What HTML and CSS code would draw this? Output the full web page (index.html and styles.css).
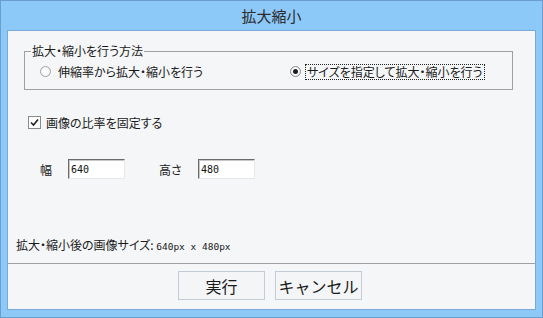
FILE: index.html
```html
<!DOCTYPE html>
<html lang="ja">
<head>
    <meta charset="UTF-8">
    <title>拡大縮小</title>
    <link rel="stylesheet" href="styles.css">
</head>
<body>

<div class="window">
    <div class="title">拡大縮小</div>

    <div class="client">
        <fieldset class="group">
            <legend>拡大・縮小を行う方法</legend>
            <div class="radios">
                <label class="opt">
                    <span class="radio"></span>
                    <span>伸縮率から拡大・縮小を行う</span>
                </label>
                <label class="opt">
                    <span class="radio checked"></span>
                    <span class="focus">サイズを指定して拡大・縮小を行う</span>
                </label>
            </div>
        </fieldset>

        <label class="keep">
            <span class="check">
                <svg width="9" height="9" viewBox="0 0 9 9"><path d="M1 4.5 L3.5 7 L8 1.5" fill="none" stroke="#222" stroke-width="1.6"/></svg>
            </span>
            <span>画像の比率を固定する</span>
        </label>

        <div class="size-row">
            <span class="lbl lbl-w">幅</span>
            <input type="text" class="num" value="640">
            <span class="lbl lbl-h">高さ</span>
            <input type="text" class="num" value="480">
        </div>

        <div class="status">拡大・縮小後の画像サイズ: <span class="px">640px x 480px</span></div>

        <div class="footer">
            <button class="btn">実行</button>
            <button class="btn">キャンセル</button>
        </div>
    </div>
</div>

</body>
</html>
```

FILE: styles.css
```css
body {
    margin: 0;
    font-family: "Noto Sans CJK JP", "Noto Sans", sans-serif;
    color: #1a1a1a;
}

.window {
    width: 543px;
    height: 318px;
    box-sizing: border-box;
    border: 1px solid #6b9dcf;
    background-color: #8cc8f8;
    padding: 0 6px 7px 6px;
    display: flex;
    flex-direction: column;
}

.title {
    height: 29px;
    line-height: 30px;
    text-align: center;
    font-size: 15px;
    color: #2b2b2b;
}

.client {
    flex: 1;
    border: 1px solid #78a9d9;
    background-color: #f5f6f8;
    display: flex;
    flex-direction: column;
    font-size: 12px;
    font-feature-settings: "palt";
}

.group {
    margin: 13px 0 0 16px;
    width: 489px;
    height: 46px;
    box-sizing: border-box;
    border: 1px solid #a0a0a0;
    padding: 0 0 0 6px;
}

.group legend {
    padding: 0 1px;
    font-size: 12px;
    line-height: 14px;
}

.radios {
    display: grid;
    grid-template-columns: 250px 1fr;
    padding: 6px 0 0 9px;
}

.opt {
    display: flex;
    align-items: center;
    height: 15px;
}

.radio {
    width: 9px;
    height: 9px;
    border-radius: 50%;
    border: 1px solid #a4a4a4;
    background: radial-gradient(circle, #ffffff 45%, #dcdcdc 100%);
    margin-right: 7px;
    position: relative;
}

.radio.checked {
    border-color: #8a8a8a;
    margin-right: 5px;
}

.radio.checked::after {
    content: "";
    position: absolute;
    left: 2px;
    top: 2px;
    width: 5px;
    height: 5px;
    border-radius: 50%;
    background-color: #1e1e1e;
}

.focus {
    outline: 1px dotted #222;
    padding: 0 1px;
    line-height: 14px;
}

.keep {
    display: flex;
    align-items: center;
    margin: 24px 0 0 20px;
    height: 16px;
}

.check {
    width: 11px;
    height: 11px;
    border: 1px solid #8a8a8a;
    background-color: #fff;
    margin-right: 5px;
    display: flex;
    align-items: center;
    justify-content: center;
}

.size-row {
    display: flex;
    align-items: center;
    margin: 29px 0 0 32px;
    height: 20px;
}

.lbl-w {
    width: 28px;
}

.lbl-h {
    margin-left: 34px;
    width: 39px;
}

.num {
    width: 57px;
    height: 20px;
    box-sizing: border-box;
    border: 1px solid;
    border-color: #6a6a6a #e8e8e8 #e8e8e8 #6a6a6a;
    box-shadow: inset 1px 1px 0 #c8c8c8;
    background-color: #fff;
    padding: 0 2px;
    font-family: "DejaVu Sans Mono", monospace;
    font-size: 10px;
    color: #111;
}

.status {
    margin: 58px 0 0 8px;
    line-height: 16px;
}

.px {
    font-family: "DejaVu Sans Mono", monospace;
    font-size: 9.5px;
}

.footer {
    margin-top: auto;
    border-top: 1px solid #a0a0a0;
    height: 46px;
    display: flex;
    align-items: flex-start;
    padding: 7px 0 0 170px;
    box-sizing: border-box;
    gap: 10px;
}

.btn {
    width: 87px;
    height: 29px;
    border: 1px solid #c3ccd6;
    background-color: #f3f5f7;
    font-family: "Noto Sans CJK JP", sans-serif;
    font-size: 16px;
    color: #1a1a1a;
    padding: 0;
}
```
